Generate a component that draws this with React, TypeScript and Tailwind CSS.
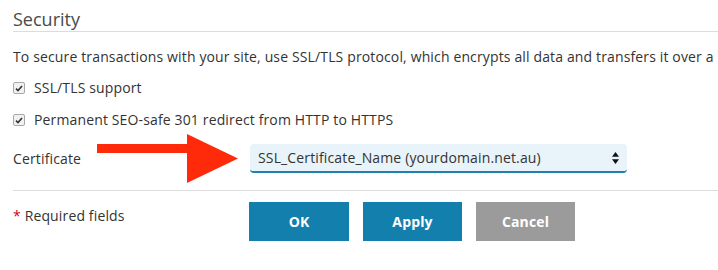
export default function App() {
    return (
        <div className="w-[718px] h-[270px] overflow-hidden bg-white text-[#333] text-[14px] leading-[20px] tracking-[0.14px]" style={{ fontFamily: '"Open Sans", "Liberation Sans", sans-serif' }}>
            <div className="pl-[13px]">
                {/* Section header */}
                <h2 className="pt-[8px] pb-[1px] border-b border-[#dcdcdc] text-[18px] leading-[22px] text-[#4a4a4a] font-normal tracking-normal">
                    Security
                </h2>

                <p className="mt-[15px] whitespace-nowrap">
                    To secure transactions with your site, use SSL/TLS protocol, which encrypts all data and transfers it over a secure connection.
                </p>

                <label className="mt-[11px] flex items-center gap-[9px] h-[20px]">
                    <CheckMark />
                    <span>SSL/TLS support</span>
                </label>

                <label className="mt-[12px] flex items-center gap-[9px] h-[20px]">
                    <CheckMark />
                    <span>Permanent SEO-safe 301 redirect from HTTP to HTTPS</span>
                </label>

                <div className="relative mt-[14px] flex items-center h-[29px]">
                    <div className="w-[237px] pt-[1px]">Certificate</div>
                    <div className="w-[377px] h-[29px] rounded-[4px] bg-[#e9f3fa] border-b-2 border-[#1f7fad] flex items-center justify-between pl-[8px] pr-[8px]">
                        <span className="pt-[1px]">SSL_Certificate_Name (yourdomain.net.au)</span>
                        <svg width="7" height="12" viewBox="0 0 7 12">
                            <path d="M3.5 0 L7 4.8 L0 4.8 Z" fill="#111" />
                            <path d="M3.5 12 L7 7.2 L0 7.2 Z" fill="#111" />
                        </svg>
                    </div>

                    {/* annotation arrow */}
                    <svg className="absolute left-[84px] top-[-10px]" width="141" height="50" viewBox="0 0 141 50">
                        <rect x="0" y="10" width="91" height="9" fill="#fe2a0a" />
                        <path d="M90 0 L141 24.5 L90 49 Z" fill="#fe2a0a" />
                    </svg>
                </div>

                <div className="mt-[17px] border-t border-[#dcdcdc]" />

                <div className="mt-[11px] flex items-start">
                    <div className="w-[236px] pt-[4px]">
                        <span className="text-[#d0021b]">*</span> Required fields
                    </div>
                    <div className="flex gap-[14px]">
                        <button className="w-[100px] h-[39px] bg-[#137fac] text-white font-bold text-[14px]">OK</button>
                        <button className="w-[99px] h-[39px] bg-[#137fac] text-white font-bold text-[14px]">Apply</button>
                        <button className="w-[99px] h-[39px] bg-[#9b9b9b] text-white font-bold text-[14px]">Cancel</button>
                    </div>
                </div>
            </div>
        </div>
    )
}

function CheckMark() {
    return (
        <span className="w-[12px] h-[12px] rounded-[2px] border border-[#a9a9a9] bg-[#f1f1f1] flex items-center justify-center">
            <svg width="8" height="7" viewBox="0 0 8 7">
                <path d="M1 3.6 L3 5.6 L7 1" fill="none" stroke="#333" strokeWidth="1.6" />
            </svg>
        </span>
    )
}
